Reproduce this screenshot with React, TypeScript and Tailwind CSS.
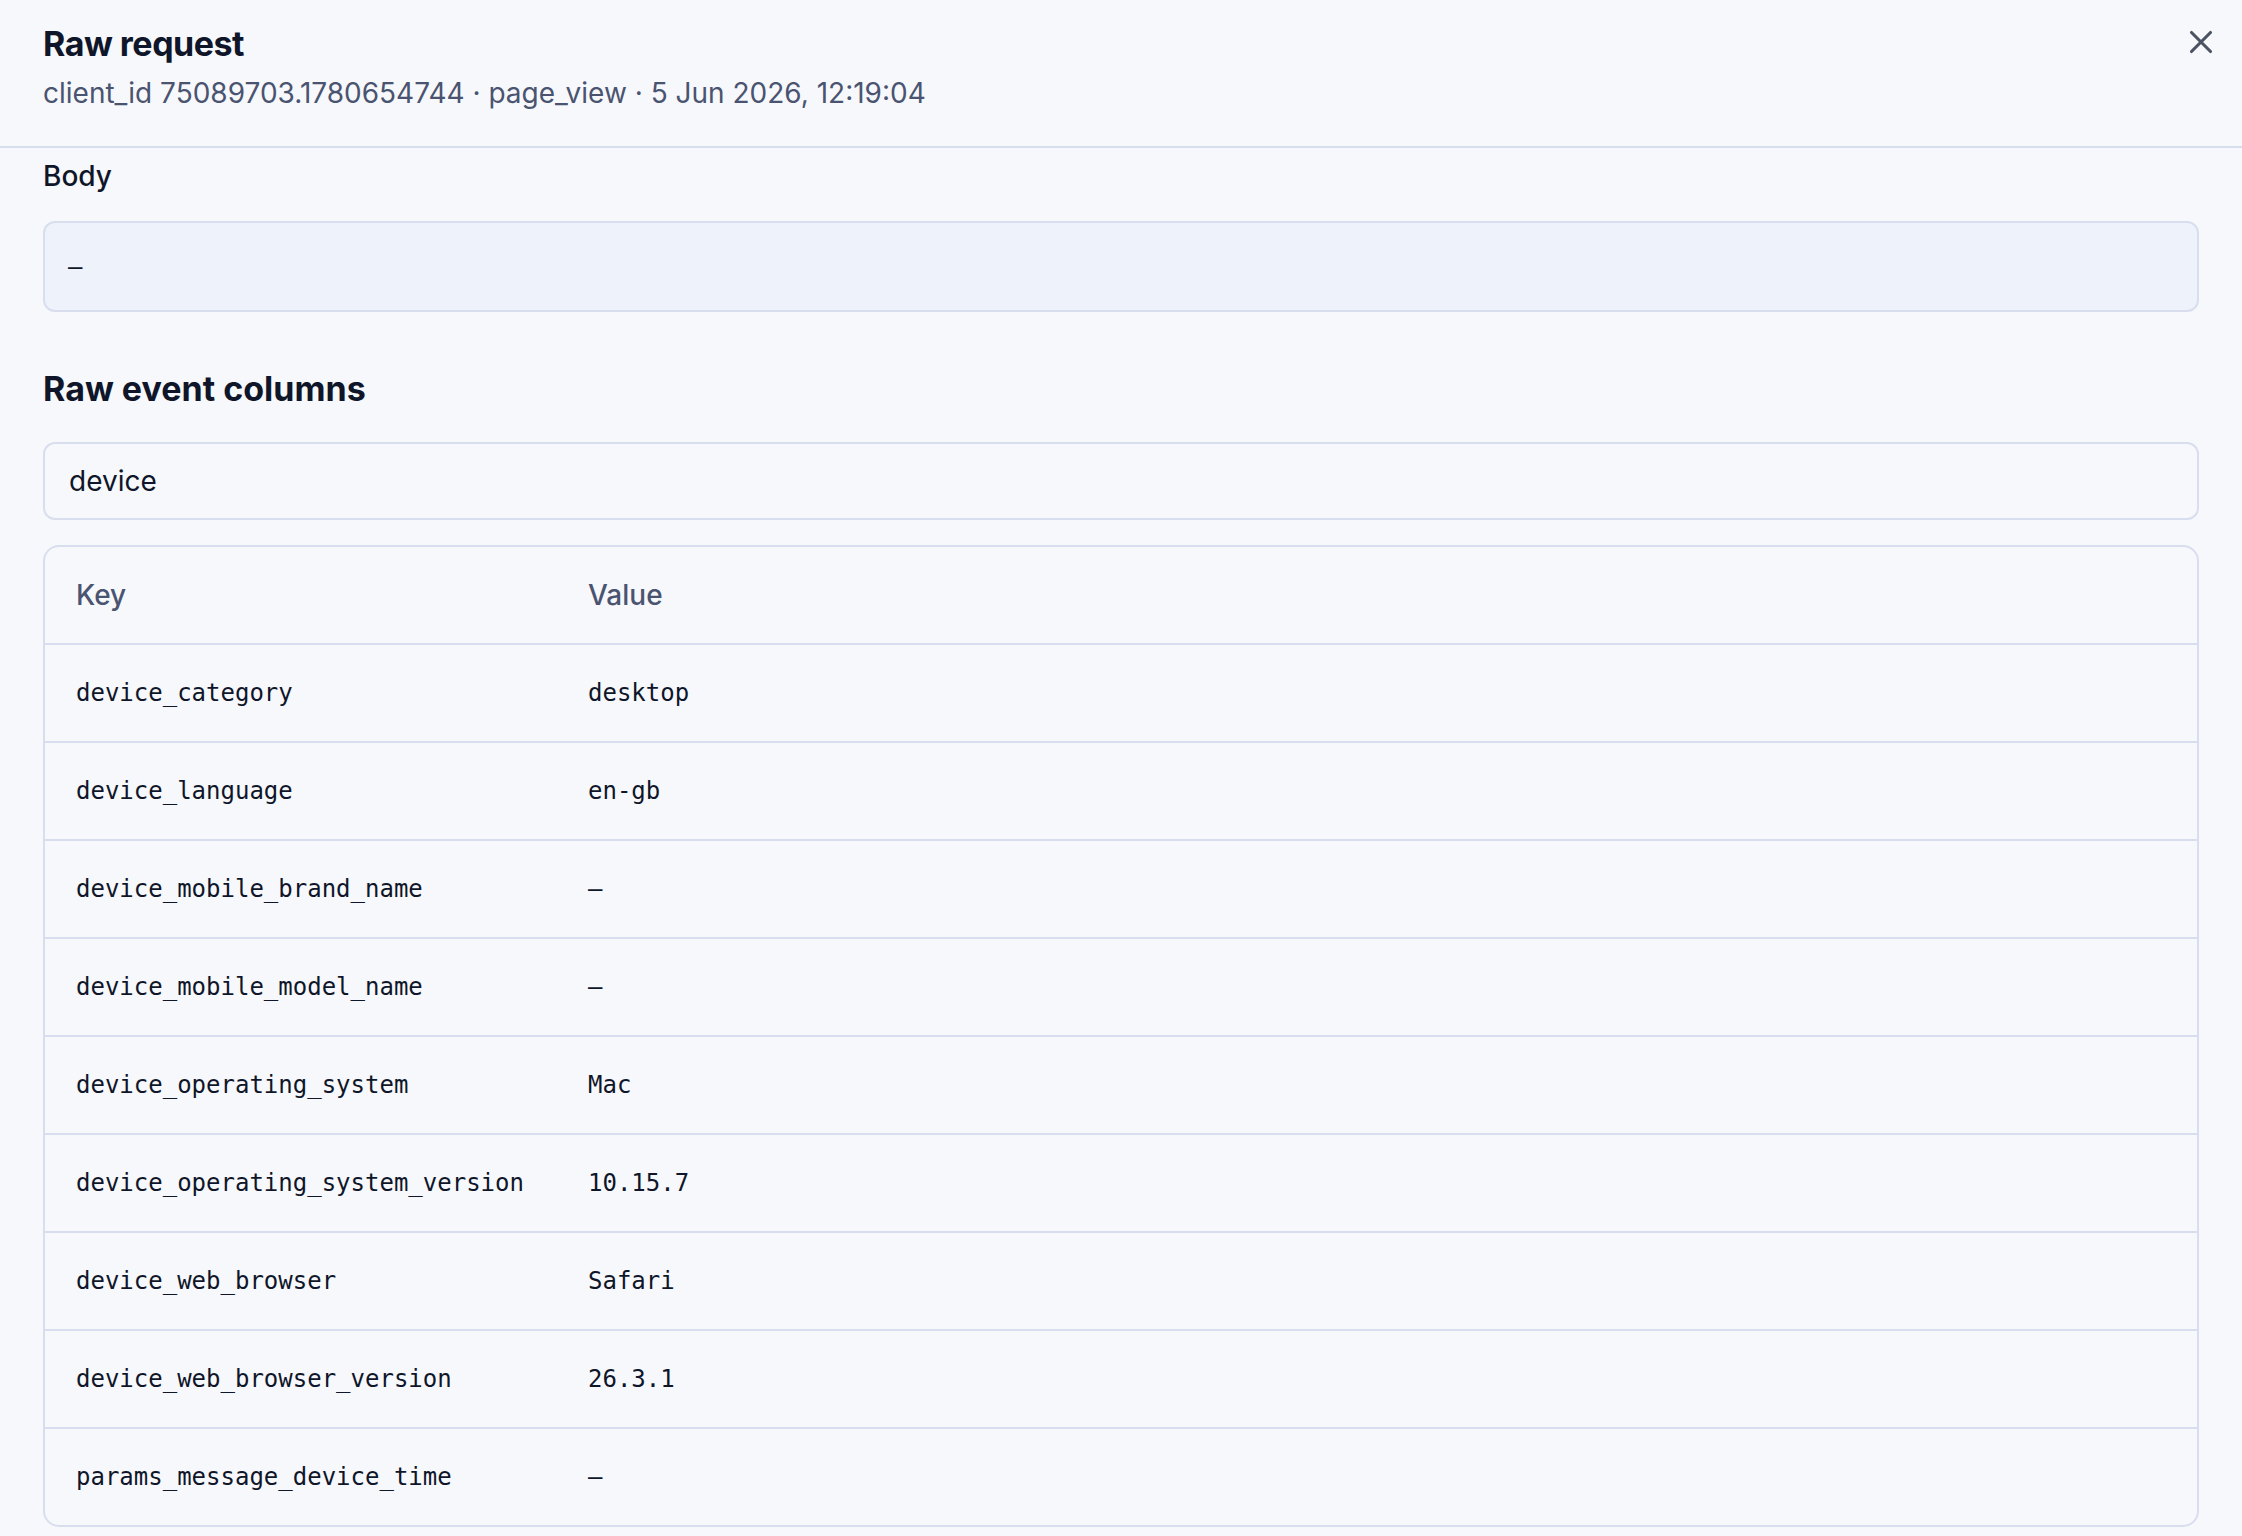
import React from "react";

const rows: [string, string][] = [
  ["device_category", "desktop"],
  ["device_language", "en-gb"],
  ["device_mobile_brand_name", "–"],
  ["device_mobile_model_name", "–"],
  ["device_operating_system", "Mac"],
  ["device_operating_system_version", "10.15.7"],
  ["device_web_browser", "Safari"],
  ["device_web_browser_version", "26.3.1"],
  ["params_message_device_time", "–"],
];

const sans = { fontFamily: "Inter, 'Noto Sans', sans-serif" };
const mono = { fontFamily: "'DejaVu Sans Mono', 'Liberation Mono', monospace" };

export default function App() {
  return (
    <div className="w-full h-[1536px] overflow-hidden bg-[#f7f8fc] text-[#0f172a]" style={sans}>
      <header className="relative h-[148px] border-b-2 border-[#d9deee] px-[43px] pt-[24px]">
        <h1 className="text-[34px] leading-[40px] font-bold tracking-[-0.5px] text-[#0f1629]">Raw request</h1>
        <p className="mt-[11px] text-[28px] leading-[36px] text-[#4a5470]">
          client_id 75089703.1780654744 · page_view · 5 Jun 2026, 12:19:04
        </p>
        <button className="absolute right-[22px] top-[23px] w-[38px] h-[38px] text-[#4b5262]" aria-label="Close">
          <svg viewBox="0 0 24 24" width="38" height="38" fill="none" stroke="currentColor" strokeWidth="2" strokeLinecap="round" strokeLinejoin="round">
            <path d="M18 6 6 18" />
            <path d="m6 6 12 12" />
          </svg>
        </button>
      </header>
      <main className="px-[43px] pt-[10px]">
        <div className="text-[28px] leading-[36px] font-medium text-[#0f1629]">Body</div>
        <div className="mt-[27px] h-[91px] flex items-center rounded-[12px] border-2 border-[#d9deee] bg-[#eef2fb] pl-[23px] text-[24px] leading-[36px] text-[#0f1629]" style={mono}>
          –
        </div>
        <h2 className="mt-[57px] text-[34px] leading-[40px] font-bold text-[#0f1629]">Raw event columns</h2>
        <div className="mt-[33px] h-[78px] flex items-center rounded-[12px] border-2 border-[#d9deee] bg-[#f7f8fc] pl-[24px] text-[28px] text-[#0f1629]">
          device
        </div>
        <div className="mt-[25px] rounded-[16px] border-2 border-[#d9deee] overflow-hidden">
          <div className="grid grid-cols-[511px_1fr] h-[96px] items-center text-[28px] font-medium text-[#4a5470]">
            <div className="px-[31px]">Key</div>
            <div className="px-[32px]">Value</div>
          </div>
          {rows.map(([k, v]) => (
            <div key={k} className="grid grid-cols-[511px_1fr] h-[98px] items-center border-t-2 border-[#d9deee] text-[24px] leading-[36px] text-[#0f1629]" style={mono}>
              <div className="px-[31px]">{k}</div>
              <div className="px-[32px]">{v}</div>
            </div>
          ))}
        </div>
      </main>
    </div>
  );
}
